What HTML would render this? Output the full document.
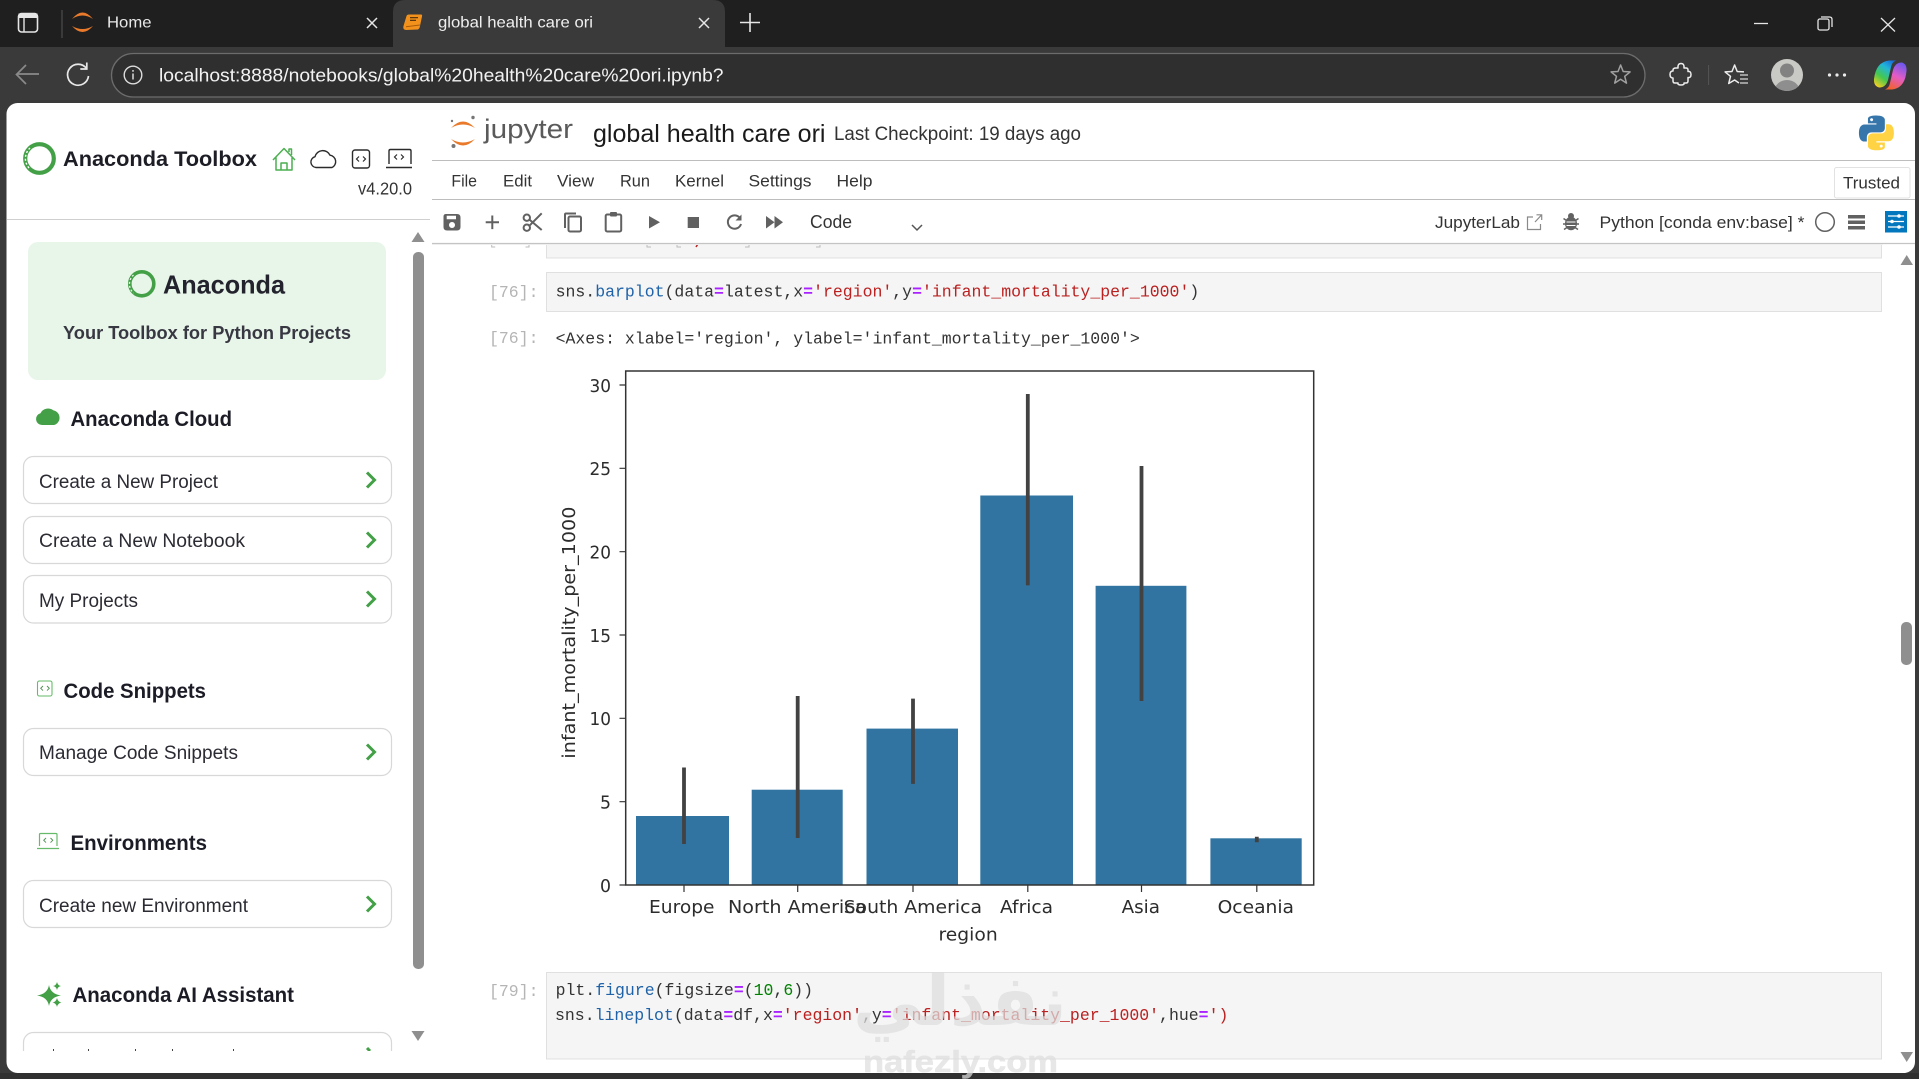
<!DOCTYPE html>
<html lang="en">
<head>
<meta charset="utf-8">
<title>global health care ori</title>
<style>
html,body{margin:0;padding:0;width:1919px;height:1079px;overflow:hidden;background:#3a3a3a}
svg{position:absolute;left:0;top:0;display:block}
text{white-space:pre}
.s{font-family:"Liberation Sans",sans-serif}
.m{font-family:"Liberation Mono",monospace;font-size:16.5px;fill:#333}
.d{font-family:"DejaVu Sans",sans-serif;font-size:18px;fill:#2c2c2c}
.b{font-weight:bold}
.side{font-size:19px;fill:#2b2b33}
.head{font-size:21px;font-weight:bold;fill:#1c1c26}
.menu{font-size:17px;fill:#333}
.p{fill:#b5b5b5}
.k{fill:#1f62a8}
.e{fill:#aa22ff;font-weight:bold}
.r{fill:#ba2121}
.g{fill:#008000}
.btn{fill:#fff;stroke:#d8d8d8;stroke-width:1.2}
.chev{fill:none;stroke:#43a047;stroke-width:3}
.cell{fill:#f5f5f5;stroke:#e0e0e0;stroke-width:1}
.bar{fill:#3274a1}
.err{stroke:#424242;stroke-width:3.8}
.tick{stroke:#333;stroke-width:1.2}
.ic{fill:none;stroke:#616161;stroke-width:2}
.icf{fill:#616161}
</style>
</head>
<body>
<svg width="1919" height="1079" viewBox="0 0 1919 1079" xmlns="http://www.w3.org/2000/svg">
<defs>
<linearGradient id="cpA" x1=".8" y1="0" x2=".2" y2="1"><stop offset="0" stop-color="#1a6fd8"/><stop offset=".3" stop-color="#22b6d8"/><stop offset=".65" stop-color="#45c84e"/><stop offset="1" stop-color="#f4cf22"/></linearGradient>
<linearGradient id="cpB" x1=".7" y1="0" x2=".3" y2="1"><stop offset="0" stop-color="#6e58ee"/><stop offset=".5" stop-color="#e45cc6"/><stop offset="1" stop-color="#f2622c"/></linearGradient>
<clipPath id="avc"><circle cx="1787" cy="75" r="16"/></clipPath>
<clipPath id="sideclip"><rect x="7" y="1000" width="410" height="51"/></clipPath>
</defs>

<!-- browser chrome -->
<rect x="0" y="0" width="1919" height="47" fill="#1f1f1f"/>
<rect x="0" y="47" width="1919" height="1032" fill="#3a3a3a"/>
<rect x="0" y="1073" width="1919" height="6" fill="#303030"/>
<path d="M393 47V12q0-12 12-12H713q12 0 12 12V47z" fill="#3a3a3a"/>

<rect x="18.5" y="13.5" width="19" height="18.5" rx="3" fill="none" stroke="#e6e6e6" stroke-width="1.6"/>
<rect x="18.5" y="13.5" width="19" height="4.5" fill="#e6e6e6"/>
<path d="M24 18v14" stroke="#e6e6e6" stroke-width="1.4"/>
<path d="M62 10v28" stroke="#555" stroke-width="1"/>
<path d="M72 19Q82.5 6 93 19Q82.5 12 72 19z" fill="#e97a2b"/>
<path d="M72 26Q82.5 38 93 26Q82.5 32 72 26z" fill="#e97a2b"/>
<text class="s" x="107" y="27.5" font-size="16" fill="#e8e8e8" textLength="44.5" lengthAdjust="spacingAndGlyphs">Home</text>
<path d="M367 18l10 10M377 18l-10 10" stroke="#e6e6e6" stroke-width="1.5"/>

<path d="M409 14.5H421Q422.500 14.500 422 16.500L420 26Q419.700 28.500 418 29.500L406 30Q402.500 29.500 403.500 26L406.500 16Q407 14.500 409 14.500z" fill="#f2921c"/>
<path d="M406 26.700L420 25" fill="none" stroke="#a85a08" stroke-width="1"/>
<path d="M410 17.700h8M410 20.300h6" stroke="#4a2c08" stroke-width="1.100"/>
<text class="s" x="438" y="27.500" font-size="16" fill="#efefef" textLength="155" lengthAdjust="spacingAndGlyphs">global health care ori</text>
<path d="M699 18l10 10M709 18l-10 10" stroke="#e6e6e6" stroke-width="1.500"/>
<path d="M750 13v19M740 22.500h20" stroke="#e6e6e6" stroke-width="1.600"/>

<path d="M1754 23.500h14" stroke="#e6e6e6" stroke-width="1.300"/>
<rect x="1818" y="19" width="11" height="11" rx="1.800" fill="none" stroke="#e6e6e6" stroke-width="1.300"/>
<path d="M1821 17h8.500q2.500 0 2.500 2.500V27" fill="none" stroke="#e6e6e6" stroke-width="1.300"/>
<path d="M1881 18l14 13.500M1895 18l-14 13.500" stroke="#e6e6e6" stroke-width="1.300"/>

<path d="M39 74H17M26 65l-9.500 9.500L26 84" fill="none" stroke="#8a8a8a" stroke-width="1.700"/>
<path d="M86.500 68.500A10.500 10.500 0 1 0 88.500 76" fill="none" stroke="#e8e8e8" stroke-width="1.700"/>
<path d="M86.800 62.500v6.500h-6.500" fill="none" stroke="#e8e8e8" stroke-width="1.700"/>

<rect x="111.500" y="53.500" width="1533.500" height="43.500" rx="21.700" fill="#2f2f2f" stroke="#6c6c6c" stroke-width="1.300"/>
<circle cx="133" cy="75" r="8.800" fill="none" stroke="#dcdcdc" stroke-width="1.400"/>
<path d="M133 73.500v6M133 70v1.800" stroke="#dcdcdc" stroke-width="1.500"/>
<text class="s" x="159" y="81.500" font-size="18.500" fill="#f2f2f2" textLength="564.500" lengthAdjust="spacingAndGlyphs">localhost:8888/notebooks/global%20health%20care%20ori.ipynb?</text>

<polygon points="1620.600,65 1623.200,71.500 1630.100,71.900 1624.700,76.300 1626.500,83.100 1620.600,79.300 1614.700,83.100 1616.500,76.300 1611.100,71.900 1618,71.500" fill="none" stroke="#a0a0a0" stroke-width="1.500" stroke-linejoin="round"/>
<path d="M1676 68H1678Q1677.500 63.500 1681 63.500Q1684.500 63.500 1684 68H1686Q1688 68 1688 70V71.500Q1691 71 1691 74.500Q1691 78 1688 77.500V81Q1688 83 1686 83H1684Q1684.500 85 1681 85Q1677.500 85 1678 83H1675Q1673 83 1673 81V78Q1670 78 1670 74.500Q1670 71 1673 71V70Q1673 68 1676 68z" fill="none" stroke="#ececec" stroke-width="1.500" stroke-linejoin="round"/>
<path d="M1708.600 65v20" stroke="#555" stroke-width="1"/>
<path d="M1739 83L1734.600 80L1728.700 83.500L1730.500 76.300L1725.100 71.900L1732 71.500L1734.600 65L1737.200 71.500L1744 71.900" fill="none" stroke="#ececec" stroke-width="1.500" stroke-linejoin="round"/>
<path d="M1740 75h8M1740 79h8M1740 83h8" stroke="#d8d8d8" stroke-width="1.300"/>
<g clip-path="url(#avc)"><rect x="1771" y="59" width="32" height="32" fill="#c9c9c5"/><circle cx="1787" cy="70.500" r="7" fill="#828282"/><ellipse cx="1787" cy="91" rx="12.500" ry="11" fill="#8e8e8e"/></g>
<circle cx="1829.500" cy="75" r="1.600" fill="#ececec"/><circle cx="1837" cy="75" r="1.600" fill="#ececec"/><circle cx="1844.500" cy="75" r="1.600" fill="#ececec"/>
<path d="M1892 89.500H1885Q1889 88 1890 83L1893 70Q1895 63 1901 62.500H1902Q1907 64 1906.500 71Q1905 88 1892 89.500z" fill="url(#cpB)"/>
<path d="M1889 60.500H1896Q1892 62 1891 67L1888 80Q1886 87 1880 87.500H1879Q1873.500 86 1874 79Q1876 62 1889 60.500z" fill="url(#cpA)"/>

<!-- page surface -->
<rect x="6.500" y="103" width="1908.500" height="970" rx="11" fill="#fff"/>

<!-- sidebar header -->
<circle cx="39.500" cy="158.500" r="14.300" fill="none" stroke="#43a047" stroke-width="4.200"/>
<path d="M30 148A14.300 14.300 0 0 0 30 169" fill="none" stroke="#fff" stroke-width="1.400" stroke-dasharray="2 2"/>
<text class="s b" x="63" y="166" font-size="21" fill="#1d1d26" textLength="194" lengthAdjust="spacingAndGlyphs">Anaconda Toolbox</text>
<path d="M273 160l11-11.500 11 11.500M276 157.500V170h16v-12.500M281 170v-7h6v7M289 152v-3h2.500v6" fill="none" stroke="#4caf50" stroke-width="1.500" stroke-linejoin="round"/>
<path d="M316 167.500a5.500 5.500 0 0 1-1-10.800a8 8 0 0 1 15-1.500a6.500 6.500 0 0 1 2 12.300z" fill="none" stroke="#2b2b2b" stroke-width="1.400" stroke-linejoin="round"/>
<rect x="352.500" y="150" width="17" height="18" rx="2.500" fill="none" stroke="#2b2b2b" stroke-width="1.400"/>
<path d="M359 156.500l-2.500 2.500 2.500 2.500M363 156.500l2.500 2.500-2.500 2.500" fill="none" stroke="#2b2b2b" stroke-width="1.200"/>
<path d="M389 164v-13q0-1.500 1.500-1.500h19q1.500 0 1.500 1.500v13M386 167.500h26" fill="none" stroke="#2b2b2b" stroke-width="1.400"/>
<path d="M397 154.500l-2.500 2.500 2.500 2.500M401 154.500l2.500 2.500-2.500 2.500" fill="none" stroke="#2b2b2b" stroke-width="1.200"/>
<text class="s" x="358" y="194.500" font-size="17.500" fill="#333" textLength="54" lengthAdjust="spacingAndGlyphs">v4.20.0</text>
<path d="M7 219.500H430" stroke="#cfcfcf" stroke-width="1"/>

<!-- sidebar scrollbar -->
<polygon points="418,232 424.500,242 411.500,242" fill="#8f8f8f"/>
<rect x="413" y="252" width="11" height="717" rx="5" fill="#8f8f8f"/>
<polygon points="411.500,1031 424.500,1031 418,1041" fill="#8f8f8f"/>

<!-- card -->
<rect x="28" y="242" width="358" height="138" rx="10" fill="#e8f5e9"/>
<circle cx="141.800" cy="283.800" r="12" fill="none" stroke="#43a047" stroke-width="3.600"/>
<path d="M133.500 275A12 12 0 0 0 133.500 293" fill="none" stroke="#e8f5e9" stroke-width="1.300" stroke-dasharray="2 2"/>
<text class="s b" x="163" y="293.500" font-size="26" fill="#23232e" textLength="122" lengthAdjust="spacingAndGlyphs">Anaconda</text>
<text class="s b" x="63" y="339" font-size="18.500" fill="#383842" textLength="288" lengthAdjust="spacingAndGlyphs">Your Toolbox for Python Projects</text>

<!-- cloud section -->
<path d="M42 425a6 6 0 0 1-1.500-11.800a8 7 0 0 1 13-2.800a7.500 7.500 0 0 1 .5 14.600z" fill="#43a047"/>
<text class="s head" x="70.500" y="426" textLength="161.500" lengthAdjust="spacingAndGlyphs">Anaconda Cloud</text>
<rect class="btn" x="23.500" y="456.500" width="368" height="47" rx="10"/>
<text class="s side" x="39" y="488" textLength="179" lengthAdjust="spacingAndGlyphs">Create a New Project</text>
<path class="chev" d="M367 472.500L374.500 480L367 487.500"/>
<rect class="btn" x="23.500" y="516.500" width="368" height="47" rx="10"/>
<text class="s side" x="39" y="547" textLength="206" lengthAdjust="spacingAndGlyphs">Create a New Notebook</text>
<path class="chev" d="M367 532.500L374.500 540L367 547.500"/>
<rect class="btn" x="23.500" y="575.500" width="368" height="47.500" rx="10"/>
<text class="s side" x="39" y="607" textLength="99" lengthAdjust="spacingAndGlyphs">My Projects</text>
<path class="chev" d="M367 591.500L374.500 599L367 606.500"/>

<!-- snippets -->
<rect x="37.500" y="681" width="14.500" height="15" rx="1.800" fill="none" stroke="#66bb6a" stroke-width="1.100"/>
<path d="M43 686l-2.300 2.300 2.300 2.300M47 686l2.300 2.300-2.300 2.300" fill="none" stroke="#4c8f50" stroke-width=".9"/>
<text class="s head" x="63.500" y="698" textLength="142.500" lengthAdjust="spacingAndGlyphs">Code Snippets</text>
<rect class="btn" x="23.500" y="728.500" width="368" height="47" rx="10"/>
<text class="s side" x="39" y="759" textLength="199" lengthAdjust="spacingAndGlyphs">Manage Code Snippets</text>
<path class="chev" d="M367 744.500L374.500 752L367 759.500"/>

<!-- environments -->
<path d="M39.500 846v-11.500q0-1 1-1h15.500q1 0 1 1V846M37 848.500h22" fill="none" stroke="#66bb6a" stroke-width="1.200"/>
<path d="M46 838l-2.300 2.300 2.300 2.300M50.500 838l2.300 2.300-2.300 2.300" fill="none" stroke="#4c8f50" stroke-width=".9"/>
<text class="s head" x="70.500" y="850" textLength="136.500" lengthAdjust="spacingAndGlyphs">Environments</text>
<rect class="btn" x="23.500" y="880.500" width="368" height="47" rx="10"/>
<text class="s side" x="39" y="912" textLength="209" lengthAdjust="spacingAndGlyphs">Create new Environment</text>
<path class="chev" d="M367 896.500L374.500 904L367 911.500"/>

<!-- AI -->
<path d="M49 985q1.500 9 12 10.500q-10.500 1.500-12 10.500q-1.500-9-12-10.500q10.500-1.500 12-10.500z" fill="#43a047"/>
<path d="M57 982q.8 3.500 4 4q-3.200.5-4 4q-.8-3.500-4-4q3.200-.5 4-4z" fill="#43a047"/>
<path d="M57 998q.8 3.800 4.500 4.500q-3.700.7-4.500 4.500q-.8-3.800-4.500-4.500q3.700-.7 4.500-4.500z" fill="#43a047"/>
<text class="s head" x="72.500" y="1002" textLength="221.500" lengthAdjust="spacingAndGlyphs">Anaconda AI Assistant</text>
<g clip-path="url(#sideclip)">
<rect class="btn" x="23.500" y="1032.500" width="368" height="47" rx="10"/>
<path d="M53 1049h1v2h-1zM88 1049h1v2h-1zM135 1049h1v2h-1zM172 1049h1v2h-1zM233 1049h1v2h-1z" fill="#444"/>
<path class="chev" d="M367 1048L370 1051"/>
</g>

<!-- partial cell under toolbar -->
<rect class="cell" x="546.500" y="225" width="1335" height="33"/>
<path d="M491.700 243v4h3.500M529 243v4h-3.500M647 243v4h4M677 243v4h4M749 243v4h-4M820 243v4h-4" fill="none" stroke="#bbb" stroke-width="1"/>
<path d="M698.500 243l-2.500 4" stroke="#ba2121" stroke-width="1.500"/>

<!-- jupyter header -->
<path d="M451 128Q463 115 475 128Q463 121 451 128z" fill="#e97a2b"/>
<path d="M451 139Q463 152 475 139Q463 146 451 139z" fill="#e97a2b"/>
<circle cx="473" cy="117.500" r="1.700" fill="#767677"/><circle cx="452" cy="121" r="1.200" fill="#767677"/><circle cx="453.500" cy="146" r="2" fill="#767677"/>
<text class="s" x="484" y="138" font-size="27" fill="#5a5a5a" textLength="89" lengthAdjust="spacingAndGlyphs">jupyter</text>
<text class="s" x="593" y="142" font-size="25" fill="#1a1a1a" textLength="232.500" lengthAdjust="spacingAndGlyphs">global health care ori</text>
<text class="s" x="834" y="140" font-size="19" fill="#333" textLength="247" lengthAdjust="spacingAndGlyphs">Last Checkpoint: 19 days ago</text>
<g transform="translate(1859,115.500) scale(1.450)">
<path fill="#3776ab" fill-rule="evenodd" d="M14.25.18l.9.2.73.26.59.3.45.32.34.34.25.34.16.33.1.3.04.26.02.2-.01.13V8.500l-.05.63-.13.55-.21.46-.26.38-.3.31-.33.25-.35.19-.35.14-.33.1-.3.07-.26.04-.21.02H8.770l-.69.05-.59.14-.5.22-.41.27-.33.32-.27.35-.2.36-.15.37-.1.35-.07.32-.04.27-.02.21v3.060H3.170l-.21-.03-.28-.07-.32-.12-.35-.18-.36-.26-.36-.36-.35-.46-.32-.59-.28-.73-.21-.88-.14-1.050-.05-1.230.06-1.220.16-1.040.24-.87.32-.71.36-.57.4-.44.42-.33.42-.24.4-.16.36-.1.32-.05.24-.01h.16l.06.01h8.160v-.83H6.180l-.01-2.750-.02-.37.05-.34.11-.31.17-.28.25-.26.31-.23.38-.2.44-.18.51-.15.58-.12.64-.1.71-.06.77-.04.84-.02 1.270.05zm-6.300 1.980l-.23.33-.08.41.08.41.23.34.33.22.41.09.41-.09.33-.22.23-.34.08-.41-.08-.41-.23-.33-.33-.22-.41-.09-.41.09z"/>
<path fill="#ffd343" fill-rule="evenodd" d="M21.040 6.110l.28.06.32.12.35.18.36.27.36.35.35.47.32.59.28.73.21.88.14 1.040.05 1.230-.06 1.230-.16 1.040-.24.86-.32.71-.36.57-.4.45-.42.33-.42.24-.4.16-.36.09-.32.05-.24.02-.16-.01h-8.220v.82h5.840l.01 2.760.02.36-.05.34-.11.31-.17.29-.25.25-.31.24-.38.2-.44.17-.51.15-.58.13-.64.09-.71.07-.77.04-.84.01-1.270-.04-1.070-.14-.9-.2-.73-.25-.59-.3-.45-.33-.34-.34-.25-.34-.16-.33-.1-.3-.04-.25-.02-.2.01-.13v-5.340l.05-.64.13-.54.21-.46.26-.38.3-.32.33-.24.35-.2.35-.14.33-.1.3-.06.26-.04.21-.02.13-.01h5.840l.69-.05.59-.14.5-.21.41-.28.33-.32.27-.35.2-.36.15-.36.1-.35.07-.32.04-.28.02-.21V6.070h2.090l.14.01zm-6.470 14.250l-.23.33-.08.41.08.41.23.33.33.23.41.08.41-.08.33-.23.23-.33.08-.41-.08-.41-.23-.33-.33-.23-.41-.08-.41.08z"/>
</g>
<path d="M432 160.500H1915" stroke="#bdbdbd" stroke-width="1"/>

<!-- menu -->
<g class="s menu">
<text x="451.400" y="186.500" textLength="25.600" lengthAdjust="spacingAndGlyphs">File</text>
<text x="503" y="186.500" textLength="29" lengthAdjust="spacingAndGlyphs">Edit</text>
<text x="557" y="186.500" textLength="37" lengthAdjust="spacingAndGlyphs">View</text>
<text x="620" y="186.500" textLength="30" lengthAdjust="spacingAndGlyphs">Run</text>
<text x="675" y="186.500" textLength="49" lengthAdjust="spacingAndGlyphs">Kernel</text>
<text x="748.500" y="186.500" textLength="63" lengthAdjust="spacingAndGlyphs">Settings</text>
<text x="836.500" y="186.500" textLength="36" lengthAdjust="spacingAndGlyphs">Help</text>
</g>
<rect x="1834.500" y="167.500" width="75.500" height="30.500" rx="2" fill="#fff" stroke="#e2e2e2" stroke-width="1"/>
<text class="s" x="1843" y="188.500" font-size="17" fill="#333" textLength="57" lengthAdjust="spacingAndGlyphs">Trusted</text>

<!-- toolbar -->
<rect x="432" y="200" width="1483" height="43" fill="#fff"/>
<path d="M432 199.500H1915" stroke="#bdbdbd" stroke-width="1"/>
<path d="M432 243.500H1915" stroke="#c4c4c4" stroke-width="1.200"/>
<path d="M432 244.500H1883" stroke="#eee" stroke-width="1"/>

<path fill-rule="evenodd" class="icf" d="M446 214h11q3.500 0 3.500 3.500V227q0 3.500-3.500 3.500H447q-3.500 0-3.500-3.500V216.500q0-2.500 2.500-2.500zM446.700 215.800v3.400h9.300v-3.400zM452 222a3 3 0 1 0 .01 0z"/>
<path d="M485.700 222.300h13.300M492.300 215.500v13.600" stroke="#616161" stroke-width="2"/>
<circle cx="526.800" cy="217.700" r="3.200" class="ic"/><circle cx="526.800" cy="227.700" r="3.200" class="ic"/>
<path d="M529.300 219.500L541.700 230M529.300 225.800L541.700 213.300" class="ic" stroke-width="2.100"/>
<rect x="568.500" y="216.500" width="12.500" height="15" rx="1.500" class="ic"/>
<path d="M565 228V214.500q0-1 1-1h10" class="ic"/>
<rect x="605.700" y="214.500" width="15.500" height="17" rx="1.500" class="ic"/>
<rect x="610" y="212" width="7" height="4.500" rx="1" fill="#616161"/>
<polygon points="649,216 660,222.300 649,228.500" fill="#616161"/>
<rect x="687.700" y="217" width="11.300" height="11" fill="#616161"/>
<path d="M739.500 217.500A6.700 6.700 0 1 0 741 224" class="ic" stroke-width="1.900"/>
<polygon points="741.500,214.500 741.500,220.500 735.500,220.500" fill="#616161"/>
<polygon points="766,216 774.500,222.300 766,228.500" fill="#616161"/><polygon points="774.500,216 783,222.300 774.500,228.500" fill="#616161"/>
<text class="s" x="810" y="228" font-size="18" fill="#333" textLength="42" lengthAdjust="spacingAndGlyphs">Code</text>
<path d="M912 225l5 5 5-5" fill="none" stroke="#555" stroke-width="1.500"/>

<text class="s" x="1435" y="228" font-size="17" fill="#333" textLength="85" lengthAdjust="spacingAndGlyphs">JupyterLab</text>
<path d="M1533 217h-5.500v12.500h13V224M1535 222l6.500-7M1536.500 214.800h5.200v5.200" fill="none" stroke="#8a8a8a" stroke-width="1.200"/>
<ellipse cx="1571" cy="223.500" rx="6" ry="6.800" fill="#616161"/>
<circle cx="1571" cy="216" r="3" fill="#616161"/>
<path d="M1563.500 218.500l3 2M1578.500 218.500l-3 2M1563 224h3M1579 224h-3M1564 229.500l3-2M1578 229.500l-3-2" stroke="#616161" stroke-width="1.500"/>
<path d="M1566.500 222h9M1566.500 225.500h9" stroke="#fff" stroke-width="1"/>
<text class="s" x="1599.500" y="228" font-size="17" fill="#333" textLength="205" lengthAdjust="spacingAndGlyphs">Python [conda env:base] *</text>
<ellipse cx="1825" cy="222" rx="9.300" ry="9.300" fill="none" stroke="#616161" stroke-width="1.500"/>
<rect x="1848" y="215" width="17" height="3.500" fill="#616161"/><rect x="1848" y="220.500" width="17" height="3.500" fill="#616161"/><rect x="1848" y="226" width="17" height="3.500" fill="#616161"/>
<rect x="1885" y="211" width="22" height="21.500" fill="#0277bd"/>
<path d="M1888 216h16M1888 221.500h16M1888 227h16" stroke="#fff" stroke-width="1.300"/>
<circle cx="1899" cy="216" r="1.800" fill="#fff"/><circle cx="1892" cy="221.500" r="1.800" fill="#fff"/><circle cx="1899" cy="227" r="1.800" fill="#fff"/>

<!-- cell 76 -->
<text class="m p" x="489" y="297">[76]:</text>
<rect class="cell" x="546.500" y="272.500" width="1335" height="39"/>
<text class="m" x="555.600" y="296.500">sns.<tspan class="k">barplot</tspan>(data<tspan class="e">=</tspan>latest,x<tspan class="e">=</tspan><tspan class="r">'region'</tspan>,y<tspan class="e">=</tspan><tspan class="r">'infant_mortality_per_1000'</tspan>)</text>
<text class="m p" x="489" y="343">[76]:</text>
<text class="m" x="555.600" y="343.500">&lt;Axes: xlabel='region', ylabel='infant_mortality_per_1000'&gt;</text>

<!-- chart -->
<rect class="bar" x="636" y="816" width="93" height="69"/>
<rect class="bar" x="751.700" y="789.700" width="91" height="95.300"/>
<rect class="bar" x="866.500" y="728.600" width="91.500" height="156.400"/>
<rect class="bar" x="980.300" y="495.500" width="92.700" height="389.500"/>
<rect class="bar" x="1095.600" y="585.800" width="90.800" height="299.200"/>
<rect class="bar" x="1210.400" y="838.300" width="91.300" height="46.700"/>
<path class="err" d="M684 767.500V844M797.700 696V838M913 698.600V783.900M1027.800 394V585.400M1141.500 466V701M1256.800 836.800V842.200"/>
<rect x="625.700" y="371" width="688" height="514" fill="none" stroke="#333" stroke-width="1.500"/>
<path class="tick" d="M619.500 885H625.700M619.500 801.700H625.700M619.500 718.300H625.700M619.500 635H625.700M619.500 551.700H625.700M619.500 468.300H625.700M619.500 385H625.700"/>
<path class="tick" d="M684 885v7M797.700 885v7M913 885v7M1027.800 885v7M1141.500 885v7M1256.800 885v7"/>
<g class="d" text-anchor="end">
<text x="611" y="892" textLength="11" lengthAdjust="spacingAndGlyphs">0</text>
<text x="611" y="808.500" textLength="11" lengthAdjust="spacingAndGlyphs">5</text>
<text x="611" y="725" textLength="21.500" lengthAdjust="spacingAndGlyphs">10</text>
<text x="611" y="641.800" textLength="21.500" lengthAdjust="spacingAndGlyphs">15</text>
<text x="611" y="558.500" textLength="21.500" lengthAdjust="spacingAndGlyphs">20</text>
<text x="611" y="475" textLength="21.500" lengthAdjust="spacingAndGlyphs">25</text>
<text x="611" y="391.800" textLength="21.500" lengthAdjust="spacingAndGlyphs">30</text>
</g>
<g class="d">
<text x="649" y="913" textLength="65.500" lengthAdjust="spacingAndGlyphs">Europe</text>
<text x="728" y="913" textLength="138.500" lengthAdjust="spacingAndGlyphs">North America</text>
<text x="843.600" y="913" textLength="138.400" lengthAdjust="spacingAndGlyphs">South America</text>
<text x="1000" y="913" textLength="53" lengthAdjust="spacingAndGlyphs">Africa</text>
<text x="1121.600" y="913" textLength="38.400" lengthAdjust="spacingAndGlyphs">Asia</text>
<text x="1217.600" y="913" textLength="76.400" lengthAdjust="spacingAndGlyphs">Oceania</text>
<text x="938.500" y="940.500" textLength="59.200" lengthAdjust="spacingAndGlyphs">region</text>
<text transform="translate(575,758.600) rotate(-90)" x="0" y="0" textLength="252" lengthAdjust="spacingAndGlyphs">infant_mortality_per_1000</text>
</g>

<!-- cell 79 -->
<text class="m p" x="489" y="996">[79]:</text>
<rect class="cell" x="546.500" y="972.500" width="1335" height="86.500"/>
<text class="m" x="555.600" y="995">plt.<tspan class="k">figure</tspan>(figsize<tspan class="e">=</tspan>(<tspan class="g">10</tspan>,<tspan class="g">6</tspan>))</text>
<text class="m" x="555" y="1020">sns.<tspan class="k">lineplot</tspan>(data<tspan class="e">=</tspan>df,x<tspan class="e">=</tspan><tspan class="r">'region'</tspan>,y<tspan class="e">=</tspan><tspan class="r">'infant_mortality_per_1000'</tspan>,hue<tspan class="e">=</tspan><tspan class="r">')</tspan></text>

<!-- right scrollbar -->
<polygon points="1906.700,255 1913,265 1900.500,265" fill="#8f8f8f"/>
<rect x="1901" y="622" width="11" height="43" rx="5" fill="#8f8f8f"/>
<polygon points="1900.500,1052 1913,1052 1906.700,1062" fill="#8f8f8f"/>

<!-- watermark -->
<g opacity=".72" fill="#dedede">
<text x="853" y="1025" font-family="'DejaVu Sans',sans-serif" font-weight="bold" font-size="70" textLength="214" lengthAdjust="spacingAndGlyphs">نفذلي</text>
<text class="s b" x="863" y="1072" font-size="31" stroke="#dedede" stroke-width=".6" textLength="195" lengthAdjust="spacingAndGlyphs">nafezly.com</text>
</g>
</svg>
</body>
</html>
